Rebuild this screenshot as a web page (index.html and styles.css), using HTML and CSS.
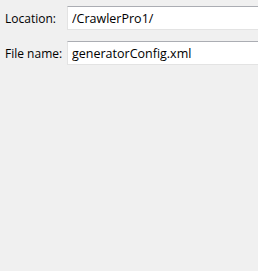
FILE: index.html
```html
<!DOCTYPE html>
<html lang="en">
<head>
  <meta charset="UTF-8">
  <title>Save Config</title>
  <link rel="stylesheet" href="styles.css">
</head>
<body>
  <form class="save-form">
    <div class="form-row">
      <label for="location">Location:</label>
      <input type="text" id="location" value="/CrawlerPro1/">
    </div>
    <div class="form-row">
      <label for="filename">File name:</label>
      <input type="text" id="filename" value="generatorConfig.xml">
    </div>
  </form>
</body>
</html>
```

FILE: styles.css
```css
html, body {
  margin: 0;
  height: 100%;
  overflow: hidden;
}
body {
  font-family: "Open Sans", "Noto Sans", sans-serif;
  font-size: 12px;
  color: #000;
  background-color: #f0f0f0;
}
.save-form {
  padding: 6px 0 0 5px;
  display: flex;
  flex-direction: column;
  gap: 11px;
}
.form-row {
  display: grid;
  grid-template-columns: 62px 1fr;
  align-items: center;
}
label {
  white-space: nowrap;
}
/* field runs off the right edge of the dialog, so no right border */
input {
  font-family: inherit;
  font-size: 12.5px;
  height: 24px;
  min-width: 0;
  box-sizing: border-box;
  padding: 0 4px;
  margin: 0;
  border: 1px solid #e3e3e3;
  border-top-color: #abadb3;
  border-right: none;
  background: #fff;
  outline: none;
}
```
